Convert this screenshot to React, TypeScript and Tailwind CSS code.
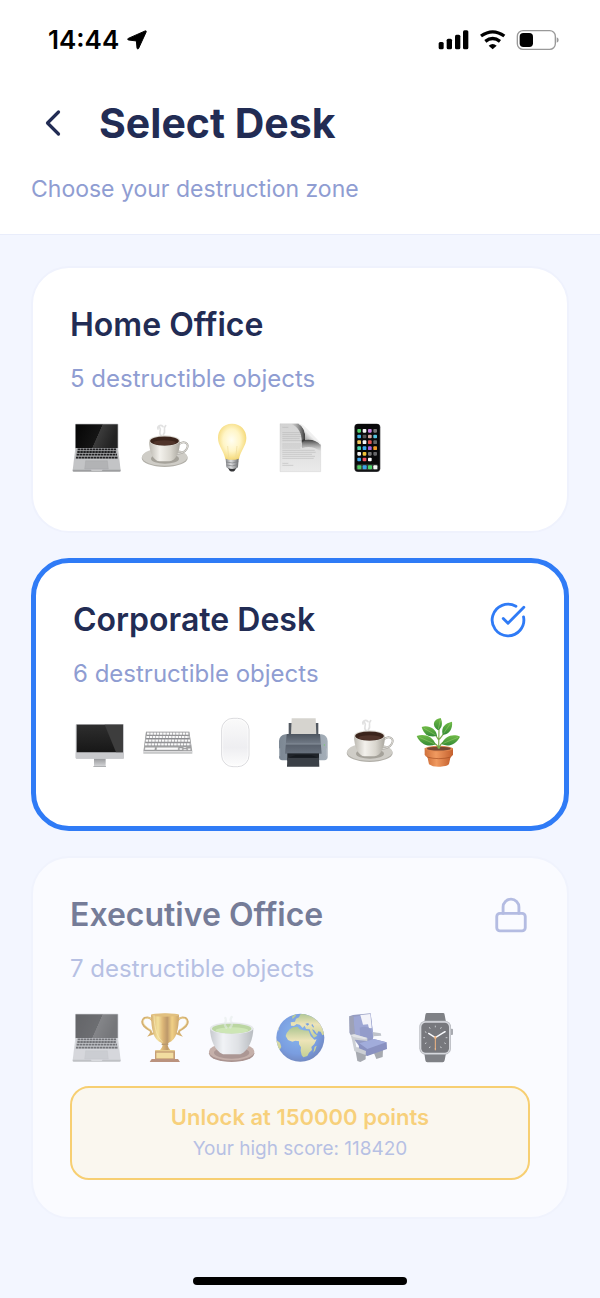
import { ChevronLeft, CircleCheckBig, Lock } from 'lucide-react';
import type { ReactNode } from 'react';

type GlyphProps = { label: string; viewBox: string; children: ReactNode };

function Glyph({ label, viewBox, children }: GlyphProps) {
  return (
    <svg role="img" aria-label={label} viewBox={viewBox} className="size-[54px]">
      {children}
    </svg>
  );
}

function Laptop({ id }: { id: string }) {
  const rows = [
    { y: 118, x1: 53, x2: 168 },
    { y: 126, x1: 52, x2: 169 },
    { y: 134, x1: 50, x2: 171 },
    { y: 143, x1: 48, x2: 173 },
  ];
  return (
    <Glyph label="Laptop" viewBox="30 30 162 162">
      <defs>
        <linearGradient id={id} x1="0" y1="0" x2="1" y2="0.25">
          <stop offset="0" stopColor="#050505" />
          <stop offset="0.6" stopColor="#151515" />
          <stop offset="0.61" stopColor="#3b3b3b" />
          <stop offset="1" stopColor="#222" />
        </linearGradient>
      </defs>
      <rect x="45" y="41" width="130" height="76" rx="3" fill="#b7b8ba" />
      <rect x="47" y="43" width="126" height="71" fill={`url(#${id})`} />
      <path d="M46 114H174L182 181H38Z" fill="#c3c4c6" />
      <path d="M50 115H170L174 147H46Z" fill="#a9aaac" />
      {rows.map((r) => (
        <line key={r.y} x1={r.x1} x2={r.x2} y1={r.y} y2={r.y} stroke="#202022" strokeWidth="5.5" strokeDasharray="7.4 1.6" />
      ))}
      <path d="M77 152H142L145 177H74Z" fill="#b2b3b5" stroke="#a0a1a3" strokeWidth="1" />
      <path d="M38 179H182V183Q182 185 179 185H41Q38 185 38 183Z" fill="#9d9ea0" />
      <path d="M92 179H128L125 182H95Z" fill="#d9d9da" />
    </Glyph>
  );
}

function Coffee({ id }: { id: string }) {
  return (
    <Glyph label="Coffee" viewBox="232 30 162 162">
      <defs>
        <linearGradient id={id} x1="0" y1="0" x2="1" y2="0">
          <stop offset="0" stopColor="#bcb9b1" />
          <stop offset="0.35" stopColor="#f3f1ec" />
          <stop offset="0.7" stopColor="#d9d6ce" />
          <stop offset="1" stopColor="#a9a69e" />
        </linearGradient>
      </defs>
      <ellipse cx="312" cy="144" rx="69" ry="27" fill="#b1afa8" />
      <ellipse cx="312" cy="141" rx="68" ry="26" fill="#cfcdc7" />
      <ellipse cx="313" cy="146" rx="42" ry="15" fill="#a5a29a" />
      <path d="M354 104Q364 94 374 98Q386 104 378 117Q370 130 348 131" fill="none" stroke="#a9a7a2" strokeWidth="6" />
      <path d="M354 104Q364 94 374 98Q386 104 378 117Q370 130 348 131" fill="none" stroke="#dedcd6" strokeWidth="3" />
      <path d="M265 92C265 125 278 153 297 154H326C346 152 358 124 358 92Z" fill={`url(#${id})`} />
      <ellipse cx="311.500" cy="92" rx="46.500" ry="16" fill="#dedbd4" />
      <ellipse cx="311.500" cy="93" rx="43" ry="13.500" fill="#3b241b" />
      <ellipse cx="312" cy="98" rx="34" ry="7.500" fill="#50342a" />
      <path d="M301 76C290 66 306 63 296 51M308 74C319 62 304 58 315 47M292 57C289 47 300 43 307 50" fill="none" stroke="#c4c4c4" strokeWidth="5" strokeLinecap="round" opacity=".5" />
    </Glyph>
  );
}

function Bulb() {
  return (
    <Glyph label="Light bulb" viewBox="435 30 162 162">
      <defs>
        <radialGradient id="bulb-glass" cx="0.48" cy="0.45" r="0.6">
          <stop offset="0" stopColor="#fffef2" />
          <stop offset="0.5" stopColor="#fff5c6" />
          <stop offset="0.85" stopColor="#f6dc80" />
          <stop offset="1" stopColor="#e6c662" />
        </radialGradient>
        <linearGradient id="bulb-base" x1="0" x2="1" y1="0" y2="0">
          <stop offset="0" stopColor="#85878b" />
          <stop offset="0.4" stopColor="#dedfe1" />
          <stop offset="1" stopColor="#6b6d70" />
        </linearGradient>
      </defs>
      <path d="M516 41C489 41 474 61 474 84C474 108 491 121 496 147C498 153 534 153 537 147C542 121 559 108 559 84C559 61 543 41 516 41Z" fill="url(#bulb-glass)" />
      <path d="M506 145L503 108M527 145L531 108" fill="none" stroke="#eddb9c" strokeWidth="2" />
      <path d="M497 146Q517 153 536 146L534 171Q530 177 517 178Q503 177 499 171Z" fill="url(#bulb-base)" />
      <path d="M498 156Q517 162 535 155M499 165Q517 171 534 164" fill="none" stroke="#7b7d81" strokeWidth="2" />
      <path d="M504 174Q517 180 529 174L524 182Q517 187 509 182Z" fill="#343538" />
    </Glyph>
  );
}

function Page() {
  const lines = [52, 68, 74, 80, 86, 92, 102, 108, 114, 121, 127, 133, 139, 145, 160, 166];
  const ends = [188, 226, 228, 230, 222, 228, 228, 230, 224, 267, 270, 259, 268, 264, 188, 203];
  return (
    <Glyph label="Document" viewBox="142 30 162 162">
      <defs>
        <linearGradient id="page-sheet" x1="0" x2="0" y1="0" y2="1">
          <stop offset="0" stopColor="#d3d3d3" />
          <stop offset="1" stopColor="#eaeaea" />
        </linearGradient>
        <linearGradient id="page-fold" x1="0" x2="1" y1="1" y2="0">
          <stop offset="0" stopColor="#555" />
          <stop offset="0.3" stopColor="#a5a5a5" />
          <stop offset="0.5" stopColor="#efefef" />
          <stop offset="1" stopColor="#fafafa" />
        </linearGradient>
        <linearGradient id="page-shade" x1="0" x2="1" y1="0" y2="0">
          <stop offset="0" stopColor="#777" stopOpacity="0" />
          <stop offset="1" stopColor="#2b2b2b" />
        </linearGradient>
        <linearGradient id="page-under" x1="0" x2="0" y1="0" y2="1">
          <stop offset="0" stopColor="#2b2b2b" />
          <stop offset="1" stopColor="#888" stopOpacity="0" />
        </linearGradient>
      </defs>
      <path d="M163 41H218Q240 46 242 89Q279 86 285 105V185H163Z" fill="url(#page-sheet)" stroke="#c6c6c6" strokeWidth="1" />
      {lines.map((y, i) => (
        <line key={y} x1="170" x2={ends[i]} y1={y} y2={y} stroke="#b0b0b0" strokeWidth="1.500" />
      ))}
      <path d="M196 41H218Q236 47 241 89L228 98Q230 56 196 41Z" fill="url(#page-shade)" />
      <path d="M229 90Q262 78 285 104V124Q256 104 229 115Z" fill="url(#page-under)" />
      <path d="M218 41Q230 40 245 57L274 87Q284 95 285 106Q270 86 238 90Q242 53 218 41Z" fill="url(#page-fold)" />
    </Glyph>
  );
}

function Phone() {
  const colours = [
    ['#52cf68', '#f5f5f5', '#c77de0', '#777'],
    ['#42b6ea', '#555', '#d8a9a0', '#55c4df'],
    ['#f5c95f', '#f4f4f4', '#e5534d', '#666'],
    ['#4ad4ac', '#3ba9ee', '#a964df', '#f09b27'],
    ['#f5f5f5', '#f2c337', '#777', '#676769'],
    ['#42a7ed', '#ef5362', '#fff', '#09090a'],
  ];
  const rowsY = [57, 74, 91, 109, 126, 143];
  const colsX = [397, 413, 429, 445];
  const dock = ['#52ca60', '#3ba4e9', '#4ed469', '#f6f6f6'];
  return (
    <Glyph label="Phone" viewBox="345 30 162 162">
      <rect x="388" y="41" width="78" height="145" rx="11" fill="#46474a" />
      <rect x="390" y="42" width="74" height="142" rx="9" fill="#09090a" />
      <rect x="394" y="163" width="66" height="18" rx="5" fill="#303634" />
      {rowsY.map((y, r) =>
        colsX.map((x, c) => <rect key={`${x}-${y}`} x={x} y={y} width="11" height="11" rx="2.500" fill={colours[r][c]} />),
      )}
      {colsX.map((x, c) => (
        <rect key={x} x={x} y="166" width="12" height="12" rx="2.500" fill={dock[c]} />
      ))}
    </Glyph>
  );
}

function Monitor() {
  return (
    <Glyph label="Desktop computer" viewBox="39 30 162 162">
      <defs>
        <linearGradient id="monitor-stand" x1="0" x2="0" y1="0" y2="1">
          <stop offset="0" stopColor="#919295" />
          <stop offset="1" stopColor="#d4d5d7" />
        </linearGradient>
        <linearGradient id="monitor-screen" x1="0" x2="0" y1="0" y2="1">
          <stop offset="0" stopColor="#2e2e2e" />
          <stop offset="1" stopColor="#171717" />
        </linearGradient>
      </defs>
      <rect x="102" y="158" width="35" height="26" fill="url(#monitor-stand)" />
      <rect x="100" y="183" width="38" height="3" rx="1" fill="#aeb0b2" />
      <rect x="47" y="57" width="145" height="104" rx="3" fill="#c8c9cc" />
      <rect x="50" y="59" width="139" height="83" fill="url(#monitor-screen)" />
      <path d="M134 59H189V142H168Z" fill="#3d3d3d" />
      <path d="M47 143H192V158Q192 161 188 161H51Q47 161 47 158Z" fill="#c9cacd" />
    </Glyph>
  );
}

function Keyboard() {
  const rows = [
    { y: 87, x1: 261, x2: 386 },
    { y: 97, x1: 259, x2: 388 },
    { y: 108, x1: 257, x2: 390 },
    { y: 119, x1: 255, x2: 392 },
  ];
  return (
    <Glyph label="Keyboard" viewBox="243 30 162 162">
      <path d="M258 80H388L397 139V146H250V139Z" fill="#c3c4c5" />
      <path d="M258 80H388L396 138H251Z" fill="#a0a1a2" />
      {rows.map((r) => (
        <g key={r.y}>
          <line x1={r.x1} x2={r.x2} y1={r.y} y2={r.y} stroke="#85868a" strokeWidth="8.500" />
          <line x1={r.x1} x2={r.x2} y1={r.y - 1} y2={r.y - 1} stroke="#fafafa" strokeWidth="6.500" strokeDasharray="8 1.700" />
        </g>
      ))}
      <path d="M255 127H286L284 135H254ZM290 127H355V135H289ZM358 129H367V135H358ZM370 126H379V130H370ZM370 132H380V136H370ZM383 130H392V136H383Z" fill="#fafafa" stroke="#88898d" strokeWidth="1" />
      <path d="M250 140H397" stroke="#e1e1e2" strokeWidth="3" />
    </Glyph>
  );
}

function Mouse() {
  return (
    <Glyph label="Mouse" viewBox="444 30 162 162">
      <defs>
        <linearGradient id="mouse-body" x1="0" x2="0" y1="0" y2="1">
          <stop offset="0" stopColor="#fafafa" />
          <stop offset="0.6" stopColor="#eeeef1" />
          <stop offset="1" stopColor="#fdfdfd" />
        </linearGradient>
      </defs>
      <rect x="485" y="40" width="82" height="145" rx="34" fill="url(#mouse-body)" stroke="#d2d3d6" strokeWidth="2.500" />
      <rect x="488" y="43" width="76" height="139" rx="31" fill="none" stroke="#fff" strokeWidth="2" />
    </Glyph>
  );
}

function Printer() {
  return (
    <Glyph label="Printer" viewBox="31 30 162 162">
      <defs>
        <linearGradient id="printer-top" x1="0" x2="0" y1="0" y2="1">
          <stop offset="0" stopColor="#4d5560" />
          <stop offset="0.5" stopColor="#727b87" />
          <stop offset="0.56" stopColor="#59616d" />
          <stop offset="1" stopColor="#69727e" />
        </linearGradient>
        <linearGradient id="printer-side" x1="0" x2="1" y1="0" y2="0">
          <stop offset="0" stopColor="#7c8793" />
          <stop offset="1" stopColor="#a5afb9" />
        </linearGradient>
      </defs>
      <path d="M69 54H158V93H69Z" fill="#535961" />
      <path d="M78 40H150L152 90H76Z" fill="#d6d4cf" />
      <path d="M59 88H168Q185 91 186 108V156Q186 165 176 166H50Q40 165 40 156V108Q41 91 59 88Z" fill="url(#printer-side)" />
      <path d="M63 87H163L168 146H58Z" fill="url(#printer-top)" />
      <path d="M60 117H167" stroke="#8c959f" strokeWidth="2" />
      <rect x="65" y="145" width="95" height="22" fill="#20242a" />
      <path d="M65 158H160L161 185H64Z" fill="#3b4047" />
      <path d="M68 158L90 150H136L158 158Z" fill="#171b20" />
      <path d="M42 130V154M184 130V154" stroke="#c2c9d0" strokeWidth="2" />
      <circle cx="176" cy="120" r="2" fill="#75cf69" />
    </Glyph>
  );
}

function Plant() {
  return (
    <Glyph label="Potted plant" viewBox="436 30 162 162">
      <defs>
        <linearGradient id="plant-pot" x1="0" x2="1" y1="0" y2="0">
          <stop offset="0" stopColor="#d0713b" />
          <stop offset="0.4" stopColor="#f09a60" />
          <stop offset="1" stopColor="#c4602e" />
        </linearGradient>
        <linearGradient id="plant-leaf" x1="0" x2="0" y1="0" y2="1">
          <stop offset="0" stopColor="#70bb46" />
          <stop offset="1" stopColor="#348a35" />
        </linearGradient>
      </defs>
      <path d="M484 149L490 178Q505 189 533 184Q547 182 550 177L556 149Z" fill="url(#plant-pot)" />
      <path d="M477 130V149Q480 161 519 161Q558 160 562 149V130Z" fill="url(#plant-pot)" />
      <path d="M484 156Q519 166 556 156" fill="none" stroke="#a64f22" strokeWidth="2" />
      <ellipse cx="519.500" cy="131" rx="42.500" ry="8.500" fill="#df874f" />
      <ellipse cx="519.500" cy="131" rx="36" ry="5.500" fill="#754634" />
      <path d="M519 131L520 70M518 130Q515 116 502 116M521 130Q523 116 535 111M519 105L509 89M521 103L535 85" fill="none" stroke="#79a94b" strokeWidth="3.500" />
      <g fill="url(#plant-leaf)">
        <path d="M525 39C502 42 497 63 517 76C531 69 531 52 525 39Z" />
        <path d="M468 66C487 59 512 70 514 93C490 98 475 90 468 66Z" />
        <path d="M453 93C476 85 501 94 510 118C487 128 464 118 453 93Z" />
        <path d="M559 50C562 71 550 89 531 89C525 66 539 54 559 50Z" />
        <path d="M583 95C564 86 537 91 528 118C549 127 572 118 583 95Z" />
      </g>
      <path d="M524 45L518 72M475 70L510 90M461 97L505 116M554 56L534 85M577 97L533 115" stroke="#a1cf72" strokeWidth="1.500" />
    </Glyph>
  );
}

function Trophy() {
  return (
    <Glyph label="Trophy" viewBox="232 30 162 162">
      <defs>
        <linearGradient id="trophy-gold" x1="0" x2="1" y1="0" y2="0">
          <stop offset="0" stopColor="#c28217" />
          <stop offset="0.25" stopColor="#f5d35c" />
          <stop offset="0.42" stopColor="#cf8d1e" />
          <stop offset="0.58" stopColor="#9a5b08" />
          <stop offset="0.75" stopColor="#f0b837" />
          <stop offset="1" stopColor="#b4720c" />
        </linearGradient>
      </defs>
      <path d="M276 62Q267 48 251 54Q239 63 250 78Q258 86 268 91Q274 96 268 104L281 99M350 62Q359 48 375 54Q387 63 376 78Q368 86 358 91Q352 96 358 104L345 99" fill="none" stroke="#c28415" strokeWidth="6" />
      <path d="M276 60Q267 49 253 56Q243 63 254 77L270 90M350 60Q359 49 373 56Q383 63 372 77L356 90" fill="none" stroke="#f4d05c" strokeWidth="2" />
      <path d="M271 45Q313 37 355 45C354 83 350 119 324 128Q318 133 324 143L331 153H296L303 143Q309 133 302 128C276 119 272 83 271 45Z" fill="url(#trophy-gold)" />
      <ellipse cx="313" cy="45" rx="42" ry="5" fill="#d69d2d" />
      <path d="M280 46C281 85 290 114 306 126" fill="none" stroke="#ffe383" strokeWidth="3" opacity=".7" />
      <path d="M303 133H323" stroke="#8f5a10" strokeWidth="4" />
      <rect x="283" y="152" width="60" height="27" fill="#a8641c" />
      <rect x="287" y="158" width="51" height="17" fill="#f2ce62" />
      <path d="M273 177H352L358 186H267Z" fill="#95502a" />
      <path d="M284 152H342" stroke="#ddb042" strokeWidth="4" />
    </Glyph>
  );
}

function Tea() {
  return (
    <Glyph label="Green tea" viewBox="435 30 162 162">
      <defs>
        <linearGradient id="tea-cup" x1="0" x2="1" y1="0" y2="0">
          <stop offset="0" stopColor="#a9acad" />
          <stop offset="0.3" stopColor="#f0f1f1" />
          <stop offset="0.65" stopColor="#d2d4d4" />
          <stop offset="1" stopColor="#929698" />
        </linearGradient>
      </defs>
      <ellipse cx="515" cy="160" rx="68" ry="26" fill="#7a5348" />
      <ellipse cx="515" cy="155" rx="68" ry="26" fill="#a78273" />
      <ellipse cx="515" cy="158" rx="53" ry="18" fill="#7d594e" />
      <path d="M450 84C450 117 464 153 489 163H541C566 153 580 117 580 84Z" fill="url(#tea-cup)" />
      <ellipse cx="515" cy="85" rx="65" ry="18" fill="#dee1de" />
      <ellipse cx="515" cy="86" rx="59" ry="14.500" fill="#97c266" />
      <ellipse cx="516" cy="91" rx="49" ry="9" fill="#b5dc85" />
      <path d="M499 83C486 69 503 68 496 54M511 82C526 66 503 65 515 51" fill="none" stroke="#dde5dc" strokeWidth="7" strokeLinecap="round" opacity=".55" />
    </Glyph>
  );
}

function Globe() {
  return (
    <Glyph label="Globe" viewBox="22 30 162 162">
      <defs>
        <radialGradient id="globe-sea" cx="0.45" cy="0.4" r="0.62">
          <stop offset="0" stopColor="#438ee3" />
          <stop offset="0.7" stopColor="#2a63cc" />
          <stop offset="1" stopColor="#1c3f96" />
        </radialGradient>
        <linearGradient id="globe-land" x1="0" x2="0" y1="0" y2="1">
          <stop offset="0" stopColor="#7da54a" />
          <stop offset="0.45" stopColor="#ead98a" />
          <stop offset="1" stopColor="#a6b84d" />
        </linearGradient>
        <clipPath id="globe-edge">
          <circle cx="104" cy="113.500" r="72" />
        </clipPath>
      </defs>
      <circle cx="104" cy="113.500" r="72" fill="url(#globe-sea)" />
      <g fill="url(#globe-land)" clipPath="url(#globe-edge)">
        <path d="M72 88L82 82L96 80L101 87L113 91L129 92L135 108L146 119L153 118L146 132L137 141L139 150L130 158L125 168L113 172L108 166L105 152L106 142L100 133L100 124L89 122L80 125L67 120L60 108L63 99Z" />
        <path d="M76 77L75 67L88 65L91 56L100 52L104 43L121 39L153 50L170 76L178 102L170 106L165 95L158 94L154 103L145 90L139 88L145 99L155 107L145 113L136 100L132 88L121 87L117 77L111 84L102 74L93 72L85 78Z" />
        <path d="M31 119L43 128L47 141L39 154L31 146ZM147 140L153 137L148 152L143 158ZM79 50L90 41L91 47L81 57ZM32 83L45 64L38 92Z" />
      </g>
      <path d="M119 71L127 69L131 73L125 77ZM140 72L145 80L143 83L137 75Z" fill="#2c6dca" />
    </Glyph>
  );
}

function Seat() {
  return (
    <Glyph label="Seat" viewBox="225 30 162 162">
      <path d="M270 143L277 183L286 186L302 178V168L327 160L334 177L353 171L354 150L362 140Z" fill="#73777d" />
      <path d="M253 49L264 45L317 40L325 108L322 128L283 139L262 112L254 99Z" fill="#56609a" />
      <path d="M265 50L317 43L325 106L286 121L269 108Z" fill="#6673b8" />
      <path d="M253 49L265 48L270 108L262 112L254 99Z" fill="#666c88" />
      <path d="M286 45L316 42L320 84L312 86L309 73L294 74L291 63Z" fill="#f3f2f6" />
      <path d="M284 83Q303 76 318 86L325 112L287 124Z" fill="#5562a8" />
      <path d="M281 131L326 117L365 127L366 147L307 168L283 152Z" fill="#434f98" />
      <path d="M283 130L326 117L364 127L307 147Z" fill="#6c7bc4" />
      <path d="M323 96L347 100L349 107L325 109Z" fill="#9da2a8" />
      <path d="M257 105L268 103L307 114V123L270 119L274 142L303 153L302 165L268 153L261 119Z" fill="#b3b6b8" />
      <path d="M257 105L268 103L307 114L300 118L266 111Z" fill="#d6d8d8" />
    </Glyph>
  );
}

function Watch() {
  const ticks = Array.from({ length: 12 }, (_, i) => i * 30);
  return (
    <Glyph label="Watch" viewBox="427 30 162 162">
      <path d="M483 39H533Q537 39 537 45L541 66H476L479 45Q480 39 483 39ZM476 160H541L537 181Q536 187 531 187H485Q480 187 479 181Z" fill="#333437" />
      <rect x="554" y="86" width="8" height="19" rx="3" fill="#77797d" />
      <rect x="461" y="62" width="95" height="102" rx="19" fill="#8d8f93" />
      <rect x="463" y="64" width="91" height="98" rx="17" fill="#c4c5c8" />
      <rect x="467" y="68" width="83" height="90" rx="13" fill="#252628" />
      {ticks.map((angle) => (
        <line key={angle} x1="509" x2="509" y1="77" y2="82" stroke="#c9c9ca" strokeWidth="2.500" transform={`rotate(${angle} 509 113)`} />
      ))}
      <path d="M509 113L538 95M509 113L489 100" stroke="#fff" strokeWidth="4" strokeLinecap="round" />
      <path d="M509 108V151" stroke="#f08b2e" strokeWidth="3" />
      <circle cx="509" cy="113" r="3.500" fill="#f08b2e" />
    </Glyph>
  );
}

type Unlock = { points: number; best: number };
type CardProps = { name: string; count: number; selected?: boolean; unlock?: Unlock; children: ReactNode };

function DeskCard({ name, count, selected = false, unlock, children }: CardProps) {
  const tone = selected ? 'border-[5px] border-[#2f7bf6]' : 'border-2 border-[#eff2fd]';
  return (
    <button
      type="button"
      aria-pressed={selected}
      disabled={Boolean(unlock)}
      className={`block w-full rounded-[38px] bg-white p-[37px] text-left disabled:opacity-60 ${tone}`}
    >
      <span className="flex h-10 items-center justify-between">
        <span className="text-[32px] leading-10 font-semibold text-[#222c54]">{name}</span>
        {selected && <CircleCheckBig size={38} strokeWidth={1.8} className="text-[#2f7bf6]" />}
        {unlock && <Lock size={38} strokeWidth={1.8} className="text-[#8b97cf]" />}
      </span>
      <span className="mt-[18px] block text-2xl text-[#8f9dd2]">{count} destructible objects</span>
      <span className="mt-[25px] mb-5 grid max-w-[405px] grid-cols-6">{children}</span>
      {unlock && (
        <span className="mt-[22px] flex h-[94px] flex-col items-center justify-center rounded-[19px] border-2 border-[#fbb616] bg-[#fff8e6]">
          <span className="text-[22px] leading-8 font-semibold text-[#fbb824]">Unlock at {unlock.points} points</span>
          <span className="text-[19px] leading-8 text-[#8f9dd2]">Your high score: {unlock.best}</span>
        </span>
      )}
    </button>
  );
}

function StatusBar() {
  return (
    <div className="flex h-20 items-center justify-between pr-10 pl-12">
      <div className="flex items-center gap-2 text-[26px] leading-8 font-semibold text-black">
        14:44
        <svg viewBox="375 90 62 62" className="size-5" aria-hidden="true">
          <path d="M379 116L431 93Q436 91 434 97L411 147Q408 152 406 146L404 124L380 121Q374 119 379 116Z" fill="black" stroke="black" strokeWidth="3" strokeLinejoin="round" />
        </svg>
      </div>
      <svg viewBox="415 87 366 66" className="h-[22px] w-[122px]" aria-hidden="true">
        <rect x="417" y="126" width="15" height="22" rx="4.500" />
        <rect x="441" y="116" width="16" height="32" rx="4.500" />
        <rect x="466" y="104" width="16" height="44" rx="4.500" />
        <rect x="490" y="91" width="16" height="57" rx="4.500" />
        <path d="M544 108Q579 83 614 108" fill="none" stroke="black" strokeWidth="10" />
        <path d="M557 124Q579 107 601 124" fill="none" stroke="black" strokeWidth="10" />
        <path d="M567 137Q579 127 591 137L579 148Z" />
        <rect x="653" y="92" width="114" height="56" rx="17" fill="none" stroke="#999" strokeWidth="4" />
        <rect x="660" y="99" width="40" height="42" rx="11" />
        <path d="M771 112Q777 114 777 120Q777 126 771 128Z" fill="#999" />
      </svg>
    </div>
  );
}

export default function App() {
  return (
    <div className="flex min-h-screen flex-col bg-[#f3f6ff] font-['Inter',sans-serif]">
      <header className="border-b border-[#e9edfb] bg-white pb-[29px]">
        <StatusBar />
        <div className="flex h-[86px] items-center gap-6 px-[31px]">
          <button type="button" aria-label="Back" className="text-[#222c54]">
            <ChevronLeft size={44} strokeWidth={1.75} />
          </button>
          <h1 className="text-[41px] leading-[50px] font-bold text-[#222c54]">Select Desk</h1>
        </div>
        <p className="mt-[7px] px-[31px] text-[23px] leading-8 text-[#8f9dd2]">Choose your destruction zone</p>
      </header>

      <main className="flex flex-1 flex-col gap-[25px] px-[31px] pt-[31px] pb-[25px]">
        <DeskCard name="Home Office" count={5}>
          <Laptop id="laptop-home" />
          <Coffee id="coffee-home" />
          <Bulb />
          <Page />
          <Phone />
        </DeskCard>
        <DeskCard name="Corporate Desk" count={6} selected>
          <Monitor />
          <Keyboard />
          <Mouse />
          <Printer />
          <Coffee id="coffee-corporate" />
          <Plant />
        </DeskCard>
        <DeskCard name="Executive Office" count={7} unlock={{ points: 150000, best: 118420 }}>
          <Laptop id="laptop-executive" />
          <Trophy />
          <Tea />
          <Globe />
          <Seat />
          <Watch />
        </DeskCard>
      </main>

      <footer className="flex justify-center pb-[13px]">
        <div className="h-2 w-[214px] rounded-full bg-black" />
      </footer>
    </div>
  );
}
